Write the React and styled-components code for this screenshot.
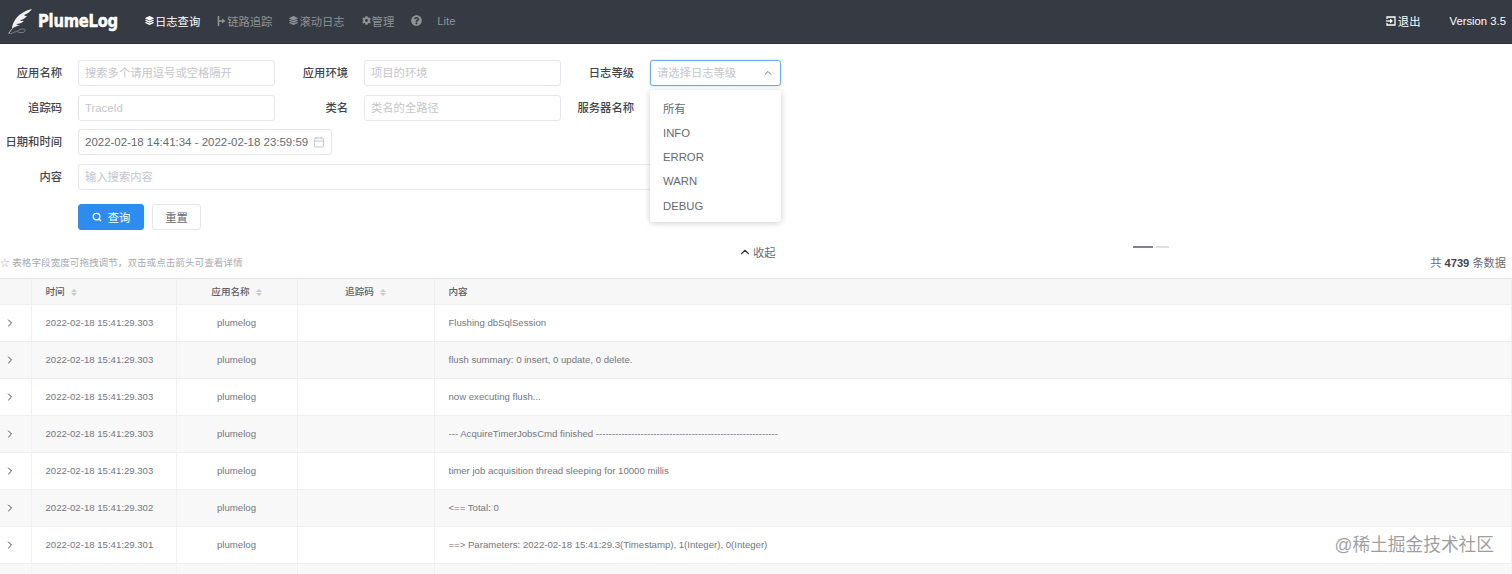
import styled, { createGlobalStyle } from "styled-components";
import { Search, Calendar, ChevronUp, ChevronRight } from "lucide-react";
import { FaCog, FaQuestionCircle, FaLayerGroup } from "react-icons/fa";

const GlobalStyle = createGlobalStyle`
  html, body {
    margin: 0;
    padding: 0;
    height: 574px;
    overflow: hidden;
    background: #fff;
    font-family: "Liberation Sans", "Noto Sans CJK SC", sans-serif;
  }
  * { box-sizing: border-box; }
`;

const Page = styled.div`
  position: relative;
  width: 1512px;
  height: 574px;
  overflow: hidden;
`;

const Header = styled.header`
  height: 44px;
  background: #363a42;
  border-bottom: 1px solid #2c2f35;
  display: flex;
  align-items: center;
  padding: 0 6px 2px 7px;
`;

const Logo = styled.div`
  display: flex;
  align-items: center;
  gap: 6px;
  width: 138px;
`;

const LogoText = styled.span`
  display: inline-block;
  font-family: "DejaVu Sans", sans-serif;
  font-weight: 700;
  font-size: 18px;
  color: #fff;
  letter-spacing: -0.3px;
  -webkit-text-stroke: 0.5px #fff;
  transform: scaleX(0.82);
  transform-origin: left center;
  width: 77px;
  white-space: nowrap;
`;

const Nav = styled.nav`
  display: flex;
  align-items: center;
  flex: 1;
`;

const NavItem = styled.span`
  display: flex;
  align-items: center;
  gap: 1px;
  font-size: 11.3px;
  margin-right: ${(p) => p.$gap || 17}px;
  color: ${(p) => (p.$active ? "#ffffff" : "#8f9296")};
  svg { flex: none; }
`;

const HeadRight = styled.div`
  display: flex;
  align-items: center;
  color: #fff;
  font-size: 11.3px;
`;

const Logout = styled.span`
  display: flex;
  align-items: center;
  gap: 2px;
  margin-right: 29px;
`;

const Form = styled.form`
  display: grid;
  grid-template-columns: 78px 197px 89px 197px 89px 131px;
  row-gap: 8.7px;
  width: 781px;
  margin: 16px 0 0;
`;

const Label = styled.label`
  font-size: 11.3px;
  font-weight: 500;
  line-height: 26px;
  color: #41464f;
  text-align: right;
  padding-right: 16px;
  white-space: nowrap;
`;

const Input = styled.div`
  height: 26px;
  border: 1px solid #e4e6eb;
  border-radius: 3px;
  padding: 0 6px;
  font-size: 11.3px;
  line-height: 24px;
  color: #c4c6ca;
  background: #fff;
  white-space: nowrap;
  overflow: hidden;
`;

const WideInput = styled(Input)`
  grid-column: 2 / span 5;
`;

const DateCell = styled.div`
  grid-column: 2 / span 5;
`;

const DateBox = styled(Input)`
  width: 254px;
  display: flex;
  align-items: center;
  justify-content: space-between;
  color: #666b73;
  font-size: 11.47px;
  padding-right: 6px;
  svg { color: #c6c8cc; }
`;

const SelectWrap = styled.div`
  position: relative;
  height: 26px;
`;

const SelectBox = styled(Input)`
  border-color: #6aaef0;
  box-shadow: 0 0 2px rgba(80, 160, 240, 0.5);
  display: flex;
  align-items: center;
  justify-content: space-between;
  svg { color: #707478; }
`;

const Dropdown = styled.ul`
  position: absolute;
  top: 30px;
  left: 0;
  width: 131px;
  height: 132px;
  margin: 0;
  padding: 6.5px 0 0;
  list-style: none;
  background: #fff;
  border-radius: 3px;
  box-shadow: 0 1px 6px rgba(0, 0, 0, 0.2);
  z-index: 3;
`;

const Option = styled.li`
  height: 24.3px;
  line-height: 24.3px;
  padding-left: 13px;
  font-size: 11.3px;
  color: #666b73;
`;

const Buttons = styled.div`
  grid-column: 2 / span 5;
  display: flex;
  gap: 8px;
  margin-top: 5px;
`;

const Button = styled.button`
  height: 26px;
  border-radius: 3px;
  border: 1px solid ${(p) => (p.$primary ? "#2d8cf0" : "#e4e6eb")};
  background: ${(p) => (p.$primary ? "#2d8cf0" : "#fff")};
  color: ${(p) => (p.$primary ? "#fff" : "#666b73")};
  width: ${(p) => p.$width}px;
  font: inherit;
  font-size: 11.3px;
  display: flex;
  align-items: center;
  justify-content: center;
  gap: 6px;
  padding: 0;
`;

const CollapseRow = styled.div`
  display: flex;
  align-items: center;
  height: 16px;
  margin-top: 14px;
  padding-left: 738px;
`;

const Collapse = styled.span`
  display: flex;
  align-items: center;
  gap: 1px;
  width: 395px;
  font-size: 11.3px;
  color: #666b73;
  svg { color: #33363b; }
`;

const Dots = styled.div`
  display: flex;
  gap: 3px;
  margin-top: -9px;
`;

const Dot = styled.i`
  display: block;
  height: 2px;
  width: ${(p) => p.$width}px;
  background: ${(p) => (p.$on ? "#80848e" : "#dcdee2")};
`;

const InfoRow = styled.div`
  display: flex;
  justify-content: space-between;
  align-items: center;
  height: 14px;
  margin-top: -5px;
  padding-right: 6px;
`;

const Note = styled.span`
  font-size: 9.6px;
  color: #a8abb0;
  white-space: nowrap;
`;

const Total = styled.span`
  font-size: 11.2px;
  color: #666b73;
  b { color: #41464f; }
`;

const Table = styled.table`
  width: 1512px;
  margin-top: 9px;
  border-collapse: collapse;
  table-layout: fixed;
  border-top: 1px solid #e2e3e6;
  font-size: 9.6px;
  color: #737780;
`;

const HeadCell = styled.th`
  height: 26px;
  padding: 0 14px;
  background: #f7f7f8;
  border-right: 1px solid #eeeff1;
  border-bottom: 1px solid #eeeff1;
  font-weight: 500;
  color: #5a5e66;
  text-align: ${(p) => p.$align || "left"};
`;

const Row = styled.tr`
  background: ${(p) => (p.$striped ? "#f8f8f8" : "#fff")};
`;

const Cell = styled.td`
  height: 37px;
  padding: 0 14px;
  border-right: 1px solid #f1f1f3;
  border-bottom: 1px solid #eeeff1;
  text-align: ${(p) => p.$align || "left"};
  white-space: nowrap;
`;

const ExpandCell = styled(Cell)`
  padding: 0 0 0 4px;
  svg { display: block; color: #44474d; }
`;

const SortWrap = styled.span`
  display: inline-flex;
  flex-direction: column;
  gap: 1px;
  margin-left: 6px;
  vertical-align: middle;
`;

const Caret = styled.i`
  width: 0;
  height: 0;
  border-left: 3px solid transparent;
  border-right: 3px solid transparent;
  border-${(p) => (p.$up ? "bottom" : "top")}: 3px solid #c5c8ce;
`;

const Watermark = styled.div`
  position: absolute;
  right: 18px;
  bottom: 18px;
  font-size: 17.7px;
  line-height: 22px;
  color: rgba(120, 120, 120, 0.72);
  white-space: nowrap;
`;

const Sort = () => (
  <SortWrap>
    <Caret $up />
    <Caret />
  </SortWrap>
);

const Feather = () => (
  <svg width="25" height="26" viewBox="0 0 25 26">
    <path
      d="M25 1C17 3 11 7 8 12c-2 3-3 6-3 9 1-1 2-2 3-2 1-1 3-1 5-2-1 0-3 0-4-1 3 0 6-1 8-3-2 0-3 0-4-1 3 0 5-2 7-4-1 0-2 0-3-1 3-1 6-3 8-6z"
      fill="#f2f2f2"
    />
    <path d="M5 21 2 25" stroke="#b9bbbf" strokeWidth="1" fill="none" />
    <path
      d="M1 25c3 2 5-1 7-1 3 0 4-3 7-3 3 0 4 1 3 2-1 2-5 2-7 1"
      stroke="#8f9296"
      strokeWidth="0.8"
      fill="none"
    />
  </svg>
);

const LinkIcon = () => (
  <svg width="9" height="10" viewBox="0 0 9 10">
    <path d="M1.5 0v10M1.5 5H7" stroke="currentColor" strokeWidth="1.6" fill="none" />
    <path d="M5 2.5 8.5 5 5 7.5z" fill="currentColor" />
  </svg>
);

const LogoutIcon = () => (
  <svg width="10" height="10" viewBox="0 0 10 10">
    <path d="M1 3V1h8v8H1V7" stroke="currentColor" strokeWidth="1.3" fill="none" />
    <path d="M0 5h5" stroke="currentColor" strokeWidth="1.3" />
    <path d="M4 2.6 7 5 4 7.4z" fill="currentColor" />
  </svg>
);

const rows = [
  ["2022-02-18 15:41:29.303", "Flushing dbSqlSession"],
  ["2022-02-18 15:41:29.303", "flush summary: 0 insert, 0 update, 0 delete."],
  ["2022-02-18 15:41:29.303", "now executing flush..."],
  [
    "2022-02-18 15:41:29.303",
    "--- AcquireTimerJobsCmd finished ---------------------------------------------------------",
  ],
  ["2022-02-18 15:41:29.303", "timer job acquisition thread sleeping for 10000 millis"],
  ["2022-02-18 15:41:29.302", "<== Total: 0"],
  ["2022-02-18 15:41:29.301", "==> Parameters: 2022-02-18 15:41:29.3(Timestamp), 1(Integer), 0(Integer)"],
  ["", ""],
];

export default function App() {
  return (
    <Page>
      <GlobalStyle />
      <Header>
        <Logo>
          <Feather />
          <LogoText>PlumeLog</LogoText>
        </Logo>
        <Nav>
          <NavItem $active>
            <FaLayerGroup size={9} />
            日志查询
          </NavItem>
          <NavItem>
            <LinkIcon />
            链路追踪
          </NavItem>
          <NavItem>
            <FaLayerGroup size={9} />
            滚动日志
          </NavItem>
          <NavItem>
            <FaCog size={9} />
            管理
          </NavItem>
          <NavItem $gap={15}>
            <FaQuestionCircle size={11} />
          </NavItem>
          <NavItem>Lite</NavItem>
        </Nav>
        <HeadRight>
          <Logout>
            <LogoutIcon />
            退出
          </Logout>
          Version 3.5
        </HeadRight>
      </Header>

      <Form>
        <Label>应用名称</Label>
        <Input>搜索多个请用逗号或空格隔开</Input>
        <Label>应用环境</Label>
        <Input>项目的环境</Input>
        <Label>日志等级</Label>
        <SelectWrap>
          <SelectBox>
            请选择日志等级
            <ChevronUp size={12} />
          </SelectBox>
          <Dropdown>
            {["所有", "INFO", "ERROR", "WARN", "DEBUG"].map((item) => (
              <Option key={item}>{item}</Option>
            ))}
          </Dropdown>
        </SelectWrap>

        <Label>追踪码</Label>
        <Input>TraceId</Input>
        <Label>类名</Label>
        <Input>类名的全路径</Input>
        <Label>服务器名称</Label>
        <Input />

        <Label>日期和时间</Label>
        <DateCell>
          <DateBox>
            2022-02-18 14:41:34 - 2022-02-18 23:59:59
            <Calendar size={12} />
          </DateBox>
        </DateCell>

        <Label>内容</Label>
        <WideInput>输入搜索内容</WideInput>

        <Buttons>
          <Button type="button" $primary $width={66}>
            <Search size={10} strokeWidth={3} />
            查询
          </Button>
          <Button type="button" $width={49}>
            重置
          </Button>
        </Buttons>
      </Form>

      <CollapseRow>
        <Collapse>
          <ChevronUp size={14} strokeWidth={2} />
          收起
        </Collapse>
        <Dots>
          <Dot $on $width={20} />
          <Dot $width={13} />
        </Dots>
      </CollapseRow>

      <InfoRow>
        <Note>☆ 表格字段宽度可拖拽调节，双击或点击箭头可查看详情</Note>
        <Total>
          共 <b>4739</b> 条数据
        </Total>
      </InfoRow>

      <Table>
        <colgroup>
          <col width="31" />
          <col width="145" />
          <col width="121" />
          <col width="137" />
          <col />
        </colgroup>
        <thead>
          <tr>
            <HeadCell />
            <HeadCell>
              时间
              <Sort />
            </HeadCell>
            <HeadCell $align="center">
              应用名称
              <Sort />
            </HeadCell>
            <HeadCell $align="center">
              追踪码
              <Sort />
            </HeadCell>
            <HeadCell>内容</HeadCell>
          </tr>
        </thead>
        <tbody>
          {rows.map(([time, content], i) => (
            <Row key={i} $striped={i % 2 === 1}>
              <ExpandCell>{time && <ChevronRight size={12} strokeWidth={2} />}</ExpandCell>
              <Cell>{time}</Cell>
              <Cell $align="center">{time && "plumelog"}</Cell>
              <Cell />
              <Cell>{content}</Cell>
            </Row>
          ))}
        </tbody>
      </Table>

      <Watermark>@稀土掘金技术社区</Watermark>
    </Page>
  );
}
